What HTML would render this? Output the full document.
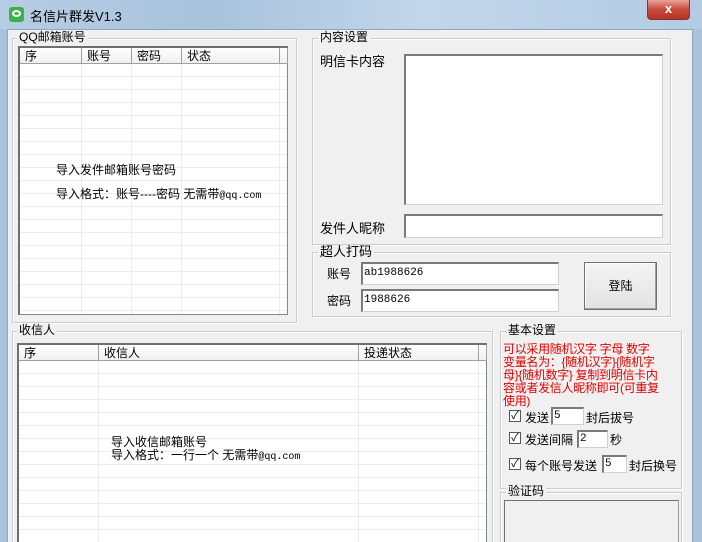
<!DOCTYPE html>
<html><head><meta charset="utf-8"><style>
*{margin:0;padding:0;box-sizing:border-box}
html,body{width:702px;height:542px;overflow:hidden}
body{position:relative;background:#a9c3dd;font-family:"Liberation Sans","Noto Sans CJK SC","WenQuanYi Zen Hei",sans-serif;font-size:12px;color:#000}
#w{position:absolute;left:0;top:0;width:702px;height:542px;overflow:hidden}
.a{position:absolute}
.title{left:0;top:0;width:702px;height:29px;background:linear-gradient(90deg,#b7cde4,#a8c2dc 30%,#c2d6ea 60%,#b4cbe3);}
.client{left:7px;top:29px;width:686px;height:513px;background:#f0f0f0;border:1px solid #8ea6c0;border-bottom:none}
.gb{position:absolute;border:1px solid #c8ccd0;box-shadow:inset 1px 1px 0 #fff,1px 1px 0 #fff}
.gl{position:absolute;background:#f0f0f0;padding:0 2px;font-size:12px;line-height:13px}
.lv{position:absolute;background:#fff;border:1px solid #828790;border-top:2px solid #6f6f6f;border-left:2px solid #6f6f6f}
.rows{position:absolute;left:0;right:0;bottom:0;background:repeating-linear-gradient(180deg,#fff 0 12px,#ececec 12px 13px)}
.hd{position:absolute;top:0;height:16px;background:linear-gradient(#fff,#f0f0f0);border-right:1px solid #a0a0a0;border-bottom:1px solid #a0a0a0;padding-left:5px;font-size:12px;line-height:16px}
.vl{position:absolute;top:16px;bottom:0;width:1px;background:#ececec}
.tb{position:absolute;background:#fff;border:1px solid #d0d0d0;border-top:2px solid #7a7a7a;border-left:2px solid #7a7a7a;font-family:"Liberation Mono",monospace;font-size:11px;line-height:18px;padding-left:1px}
.cb{position:absolute;width:12px;height:12px;border:1px solid #555;background:#fff;font-size:11px;line-height:10px;text-align:center}
.red{color:#e00000;font-size:12px;line-height:13px;letter-spacing:-0.3px}
</style></head><body><div id="w">
<div class="a title"></div>
<div class="a" style="left:9px;top:7px;width:15px;height:15px;background:#3cb14a;border-radius:3px"></div>
<div class="a" style="left:12px;top:10px;width:9px;height:7px;border:2px solid #fff;border-radius:50%"></div>
<div class="a" style="left:30px;top:6px;font-size:13px">名信片群发V1.3</div>
<div class="a" style="left:647px;top:0;width:43px;height:20px;background:linear-gradient(#e8a49a,#c74a3a 50%,#b83224);border:1px solid #7a3a34;border-top:none;border-radius:0 0 4px 4px;color:#fff;text-align:center;font-weight:bold;font-size:13px;line-height:18px">x</div>
<div class="a client"></div>

<div class="gb" style="left:12px;top:38px;width:285px;height:285px"></div>
<div class="gl" style="left:17px;top:31px">QQ邮箱账号</div>
<div class="lv" style="left:18px;top:46px;width:270px;height:269px">
 <div class="rows" style="top:16px"></div>
 <div class="hd" style="left:0;width:62px">序</div>
 <div class="hd" style="left:62px;width:50px">账号</div>
 <div class="hd" style="left:112px;width:50px">密码</div>
 <div class="hd" style="left:162px;width:98px">状态</div>
 <div class="hd" style="left:260px;width:8px"></div>
 <div class="vl" style="left:61px"></div><div class="vl" style="left:111px"></div><div class="vl" style="left:161px"></div><div class="vl" style="left:259px"></div>
 <div class="a" style="left:36px;top:113px;font-size:12px">导入发件邮箱账号密码</div>
 <div class="a" style="left:36px;top:137px;font-size:12px">导入格式：账号----密码 无需带<span style="font-family:'Liberation Mono';font-size:10px">@qq.com</span></div>
</div>

<div class="gb" style="left:312px;top:38px;width:359px;height:207px"></div>
<div class="gl" style="left:318px;top:31px">内容设置</div>
<div class="a" style="left:320px;top:51px;font-size:13px">明信卡内容</div>
<div class="tb" style="left:404px;top:54px;width:259px;height:151px"></div>
<div class="a" style="left:320px;top:218px;font-size:13px">发件人昵称</div>
<div class="tb" style="left:404px;top:214px;width:259px;height:24px"></div>

<div class="gb" style="left:312px;top:252px;width:359px;height:65px"></div>
<div class="gl" style="left:318px;top:245px;font-size:13px">超人打码</div>
<div class="a" style="left:327px;top:265px;font-size:12px">账号</div>
<div class="tb" style="left:361px;top:262px;width:198px;height:23px;line-height:19px">ab1988626</div>
<div class="a" style="left:327px;top:292px;font-size:12px">密码</div>
<div class="tb" style="left:361px;top:289px;width:198px;height:23px;line-height:19px">1988626</div>
<div class="a" style="left:584px;top:262px;width:73px;height:48px;background:linear-gradient(#f4f4f4,#e2e2e2);border:1px solid #707070;box-shadow:inset -1px -1px 0 #a0a0a0,inset 1px 1px 0 #fff;text-align:center;line-height:46px;font-size:12px">登陆</div>

<div class="gb" style="left:12px;top:331px;width:481px;height:220px"></div>
<div class="gl" style="left:17px;top:324px;font-size:12px">收信人</div>
<div class="lv" style="left:17px;top:343px;width:470px;height:210px">
 <div class="rows" style="top:16px"></div>
 <div class="hd" style="left:0;width:80px">序</div>
 <div class="hd" style="left:80px;width:260px">收信人</div>
 <div class="hd" style="left:340px;width:120px">投递状态</div>
 <div class="hd" style="left:460px;width:8px"></div>
 <div class="vl" style="left:79px"></div><div class="vl" style="left:339px"></div><div class="vl" style="left:459px"></div>
 <div class="a" style="left:92px;top:91px;font-size:12px;line-height:13px">导入收信邮箱账号<br>导入格式：一行一个 无需带<span style="font-family:'Liberation Mono';font-size:10px">@qq.com</span></div>
</div>

<div class="gb" style="left:500px;top:331px;width:182px;height:158px"></div>
<div class="gl" style="left:506px;top:324px;font-size:12px">基本设置</div>
<div class="a red" style="left:503px;top:343px;width:172px">可以采用随机汉字 字母 数字<br>变量名为：{随机汉字}{随机字<br>母}{随机数字} 复制到明信卡内<br>容或者发信人昵称即可(可重复<br>使用)</div>
<div class="cb" style="left:509px;top:410px">✓</div>
<div class="a" style="left:525px;top:409px;font-size:12px">发送</div>
<div class="tb" style="left:551px;top:407px;width:33px;height:18px;line-height:14px">5</div>
<div class="a" style="left:586px;top:409px;font-size:12px">封后拔号</div>
<div class="cb" style="left:509px;top:432px">✓</div>
<div class="a" style="left:525px;top:431px;font-size:12px">发送间隔</div>
<div class="tb" style="left:577px;top:430px;width:31px;height:18px;line-height:14px">2</div>
<div class="a" style="left:610px;top:431px;font-size:12px">秒</div>
<div class="cb" style="left:509px;top:458px">✓</div>
<div class="a" style="left:525px;top:457px;font-size:12px">每个账号发送</div>
<div class="tb" style="left:602px;top:455px;width:25px;height:18px;line-height:14px">5</div>
<div class="a" style="left:629px;top:457px;font-size:12px">封后换号</div>

<div class="gb" style="left:500px;top:492px;width:182px;height:60px"></div>
<div class="gl" style="left:506px;top:485px;font-size:12px">验证码</div>
<div class="a" style="left:504px;top:500px;width:175px;height:50px;border:1px solid #a0a0a0;border-top-color:#707070;border-left-color:#707070"></div>
</div></body></html>
